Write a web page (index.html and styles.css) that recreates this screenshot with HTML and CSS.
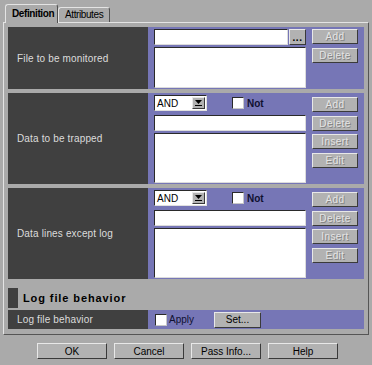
FILE: index.html
```html
<!DOCTYPE html>
<html lang="en">
<head>
<meta charset="UTF-8">
<meta name="viewport" content="width=device-width, initial-scale=1.0">
<title>Log File Trap Definition</title>
<link rel="stylesheet" href="styles.css">
</head>
<body>
  <div class="window">
    <div class="tabs">
      <div class="tab active">Definition</div>
      <div class="tab">Attributes</div>
    </div>

    <div class="panel">
      <div class="section s1">
        <div class="label">File to be monitored</div>
        <div class="body">
          <div class="fields">
            <div class="line">
              <div class="input grow"></div>
              <div class="btn browse">...</div>
            </div>
            <div class="list list-small"></div>
          </div>
          <div class="actions">
            <div class="btn off">Add</div>
            <div class="btn off">Delete</div>
          </div>
        </div>
      </div>

      <div class="section s2">
        <div class="label">Data to be trapped</div>
        <div class="body">
          <div class="fields">
            <div class="line">
              <div class="combo">
                <span class="combo-text">AND</span>
                <span class="combo-arrow">
                  <svg width="9" height="8" viewBox="0 0 9 8"><path d="M1 1h7L4.5 5z" fill="#000"/><rect x="1" y="6" width="7" height="1" fill="#000"/></svg>
                </span>
              </div>
              <div class="check"></div>
              <span class="check-label">Not</span>
            </div>
            <div class="input"></div>
            <div class="list"></div>
          </div>
          <div class="actions pad">
            <div class="btn off">Add</div>
            <div class="btn off">Delete</div>
            <div class="btn off">Insert</div>
            <div class="btn off">Edit</div>
          </div>
        </div>
      </div>

      <div class="section s2">
        <div class="label">Data lines except log</div>
        <div class="body">
          <div class="fields">
            <div class="line">
              <div class="combo">
                <span class="combo-text">AND</span>
                <span class="combo-arrow">
                  <svg width="9" height="8" viewBox="0 0 9 8"><path d="M1 1h7L4.5 5z" fill="#000"/><rect x="1" y="6" width="7" height="1" fill="#000"/></svg>
                </span>
              </div>
              <div class="check"></div>
              <span class="check-label">Not</span>
            </div>
            <div class="input"></div>
            <div class="list"></div>
          </div>
          <div class="actions pad">
            <div class="btn off">Add</div>
            <div class="btn off">Delete</div>
            <div class="btn off">Insert</div>
            <div class="btn off">Edit</div>
          </div>
        </div>
      </div>

      <div class="heading">
        <div class="heading-mark"></div>
        <span>Log file behavior</span>
      </div>

      <div class="section row">
        <div class="label">Log file behavior</div>
        <div class="body row-body">
          <div class="check"></div>
          <span class="apply">Apply</span>
          <div class="btn set">Set...</div>
        </div>
      </div>
    </div>

    <div class="footer">
      <div class="btn big">OK</div>
      <div class="btn big">Cancel</div>
      <div class="btn big">Pass Info...</div>
      <div class="btn big">Help</div>
    </div>
  </div>
</body>
</html>
```

FILE: styles.css
```css
body {
  margin: 0;
  padding: 0;
  background-color: #aaaaaa;
  font-family: 'Liberation Sans', Arial, sans-serif;
  font-size: 10px;
  color: #000;
}
.window {
  width: 372px;
  height: 365px;
  overflow: hidden;
}
.tabs {
  display: flex;
  align-items: flex-end;
  height: 22px;
  padding-left: 5px;
}
.tab {
  box-sizing: border-box;
  height: 15px;
  padding: 0 6px;
  border-top: 1px solid #e4e4e4;
  border-left: 1px solid #e4e4e4;
  border-right: 1px solid #505050;
  border-radius: 3px 3px 0 0;
  font-size: 10px;
  letter-spacing: -0.4px;
  line-height: 14px;
}
.tab.active {
  height: 19px;
  width: 53px;
  margin-bottom: -1px;
  padding-top: 2px;
  font-weight: bold;
  background-color: #aaaaaa;
  position: relative;
  z-index: 1;
}
.panel {
  box-sizing: border-box;
  width: 366px;
  margin-left: 3px;
  padding: 4px 4px 5px 4px;
  border-top: 1px solid #e4e4e4;
  border-left: 1px solid #e4e4e4;
  border-right: 1px solid #555555;
  border-bottom: 1px solid #555555;
  display: flex;
  flex-direction: column;
  gap: 4px;
}
.section {
  display: flex;
}
.s1 {
  height: 62px;
}
.s2 {
  height: 91px;
}
.label {
  width: 140px;
  flex-shrink: 0;
  box-sizing: border-box;
  padding-left: 9px;
  display: flex;
  align-items: center;
  background-color: #404040;
  color: #dcdcdc;
  letter-spacing: 0.15px;
}
.body {
  flex: 1;
  display: flex;
  gap: 6px;
  padding: 2px 5px 0 6px;
  background-color: #7676b6;
}
.fields {
  width: 152px;
  display: flex;
  flex-direction: column;
}
.line {
  display: flex;
  align-items: center;
  height: 16px;
}
.s1 .list {
  margin-top: 2px;
}
.s2 .input {
  margin-top: 4px;
}
.s2 .list {
  margin-top: 2px;
}
.input, .list {
  box-sizing: border-box;
  height: 16px;
  background-color: #fff;
  border-top: 1px solid #2a2a2a;
  border-left: 1px solid #2a2a2a;
  border-right: 1px solid #dcdcdc;
  border-bottom: 1px solid #dcdcdc;
}
.input.grow {
  flex: 1;
  height: 16px;
}
.list {
  height: 50px;
}
.list.list-small {
  height: 41px;
}
.actions {
  width: 46px;
  display: flex;
  flex-direction: column;
  gap: 3.5px;
}
.actions.pad {
  padding-top: 2px;
}
.btn {
  box-sizing: border-box;
  height: 15px;
  display: flex;
  align-items: center;
  justify-content: center;
  background-color: #b2b2b2;
  border-top: 1px solid #e8e8e8;
  border-left: 1px solid #e8e8e8;
  border-right: 1px solid #3a3a3a;
  border-bottom: 1px solid #3a3a3a;
  font-size: 10px;
  white-space: nowrap;
}
.btn.off {
  color: #e4e4e4;
  text-shadow: 1px 1px 0 #808080;
  letter-spacing: 0.4px;
}
.btn.browse {
  width: 17px;
  height: 16px;
  margin-left: 1px;
  font-weight: bold;
  letter-spacing: 0.5px;
}
.combo {
  box-sizing: border-box;
  width: 53px;
  height: 16px;
  display: flex;
  align-items: center;
  background-color: #fff;
  border-top: 1px solid #2a2a2a;
  border-left: 1px solid #2a2a2a;
  border-right: 1px solid #e0e0e0;
  border-bottom: 1px solid #e0e0e0;
}
.combo-text {
  flex: 1;
  padding-left: 2px;
  font-size: 10px;
}
.combo-arrow {
  box-sizing: border-box;
  width: 13px;
  height: 12px;
  margin-right: 1px;
  display: flex;
  align-items: center;
  justify-content: center;
  background-color: #b2b2b2;
  border-top: 1px solid #e8e8e8;
  border-left: 1px solid #e8e8e8;
  border-right: 1px solid #3a3a3a;
  border-bottom: 1px solid #3a3a3a;
}
.check {
  box-sizing: border-box;
  width: 12px;
  height: 12px;
  flex-shrink: 0;
  margin-left: 25px;
  background-color: #fff;
  border-top: 1px solid #2a2a2a;
  border-left: 1px solid #2a2a2a;
  border-right: 1px solid #c8c8c8;
  border-bottom: 1px solid #c8c8c8;
}
.check-label {
  margin-left: 3px;
  font-weight: bold;
  color: #101030;
}
.heading {
  display: flex;
  align-items: center;
  height: 20px;
  margin-top: 5px;
  font-size: 11px;
  font-weight: bold;
  letter-spacing: 0.9px;
}
.heading-mark {
  width: 10px;
  height: 20px;
  margin-right: 5px;
  background-color: #404040;
}
.row {
  height: 19px;
  margin-top: -2px;
}
.row-body {
  align-items: center;
  gap: 0;
  padding: 0 0 0 7px;
}
.row-body .check {
  margin-left: 0;
}
.apply {
  margin-left: 2px;
  width: 45px;
  color: #101030;
}
.btn.set {
  width: 47px;
  height: 16px;
}
.footer {
  display: flex;
  gap: 7px;
  padding-left: 37px;
  margin-top: 8px;
}
.btn.big {
  width: 70px;
  height: 16px;
}
```
